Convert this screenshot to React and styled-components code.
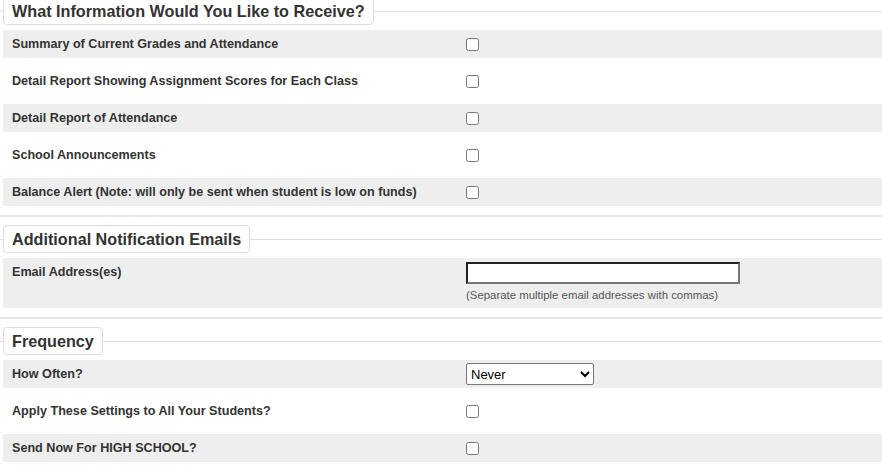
import React from "react";
import styled, { createGlobalStyle } from "styled-components";

const Global = createGlobalStyle`
  html, body { margin: 0; padding: 0; background: #fff; }
  body { font-family: "Liberation Sans", Arial, sans-serif; color: #333; }
  * { box-sizing: border-box; }
`;

const Page = styled.div`
  width: 882px;
  margin-top: -3px;
  overflow: hidden;
`;

const Section = styled.fieldset`
  margin: 0;
  padding: 0 0 0 3px;
  border: none;
  border-top: 1px solid #dcdcdc;
  min-width: 0;
`;

const Legend = styled.legend`
  margin: 0;
  padding: 0 8px;
  height: 28px;
  line-height: 26px;
  border: 1px solid #dcdcdc;
  border-radius: 4px;
  background: #fff;
  font-size: 16.2px;
  font-weight: bold;
  color: #333;
`;

const Rows = styled.div`
  display: flex;
  flex-direction: column;
  gap: 9px;
  padding: 5px 0 9px;
`;

const Row = styled.div`
  display: grid;
  grid-template-columns: 463px 1fr;
  align-items: ${(p) => (p.$top ? "start" : "center")};
  min-height: 28px;
  background: ${(p) => (p.$shade ? "#eeeeee" : "#fff")};
  padding: ${(p) => (p.$top ? "4px 0 6px" : "0")};
`;

const Label = styled.div`
  padding-left: 9px;
  font-size: 12.6px;
  font-weight: bold;
  color: #333;
  padding-top: ${(p) => (p.$top ? "3px" : "0")};
`;

const Control = styled.div`
  display: flex;
  flex-direction: column;
  align-items: flex-start;
`;

const Check = styled.input.attrs({ type: "checkbox" })`
  margin: 0;
  width: 13px;
  height: 13px;
`;

const TextBox = styled.input.attrs({ type: "text" })`
  width: 274px;
  height: 22px;
  margin: 0;
  border: 2px inset #767676;
  background: #fff;
  font-family: "Liberation Sans", Arial, sans-serif;
  font-size: 13px;
`;

const Help = styled.div`
  margin-top: 5px;
  font-size: 11.4px;
  line-height: 13px;
  color: #555;
`;

const Select = styled.select`
  width: 128px;
  height: 22px;
  margin: 0;
  font-family: "Liberation Sans", Arial, sans-serif;
  font-size: 13px;
  color: #000;
  background: #fff;
  border: 1px solid #767676;
  border-radius: 2px;
`;

const Divider = styled.hr`
  margin: 0 0 8px;
  border: none;
  height: 2px;
  background: #e8e8e8;
`;

const info = [
  "Summary of Current Grades and Attendance",
  "Detail Report Showing Assignment Scores for Each Class",
  "Detail Report of Attendance",
  "School Announcements",
  "Balance Alert (Note: will only be sent when student is low on funds)",
];

export default function App() {
  return (
    <Page>
      <Global />
      <Section>
        <Legend>What Information Would You Like to Receive?</Legend>
        <Rows>
          {info.map((t, i) => (
            <Row key={t} $shade={i % 2 === 0}>
              <Label>{t}</Label>
              <Control>
                <Check />
              </Control>
            </Row>
          ))}
        </Rows>
      </Section>
      <Divider />
      <Section>
        <Legend>Additional Notification Emails</Legend>
        <Rows>
          <Row $shade $top>
            <Label $top>Email Address(es)</Label>
            <Control>
              <TextBox />
              <Help>(Separate multiple email addresses with commas)</Help>
            </Control>
          </Row>
        </Rows>
      </Section>
      <Divider />
      <Section>
        <Legend>Frequency</Legend>
        <Rows>
          <Row $shade>
            <Label>How Often?</Label>
            <Control>
              <Select defaultValue="Never">
                <option>Never</option>
                <option>Daily</option>
                <option>Weekly</option>
                <option>Monthly</option>
              </Select>
            </Control>
          </Row>
          <Row>
            <Label>Apply These Settings to All Your Students?</Label>
            <Control>
              <Check />
            </Control>
          </Row>
          <Row $shade>
            <Label>Send Now For HIGH SCHOOL?</Label>
            <Control>
              <Check />
            </Control>
          </Row>
        </Rows>
      </Section>
    </Page>
  );
}
